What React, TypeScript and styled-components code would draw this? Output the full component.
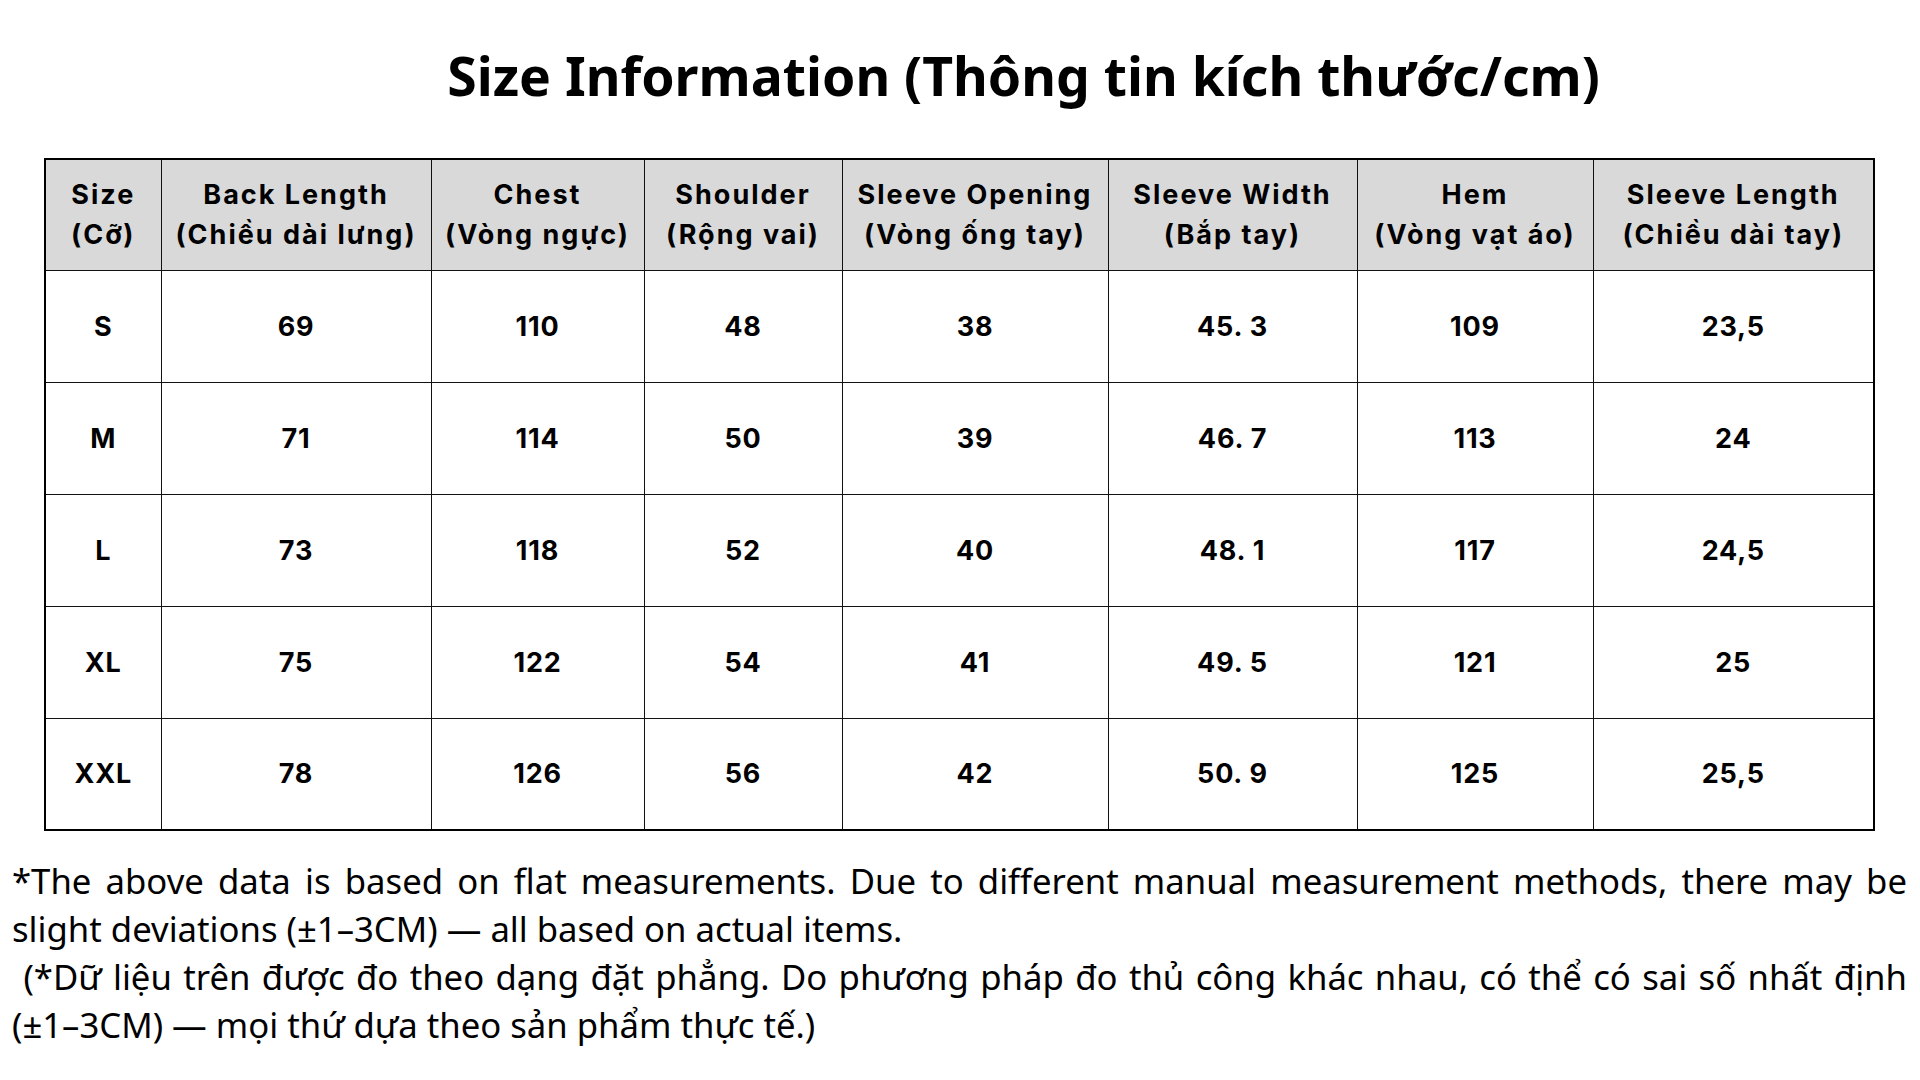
import styled, { createGlobalStyle } from "styled-components";

const GlobalStyle = createGlobalStyle`
    html, body {
        margin: 0;
        padding: 0;
        background: #ffffff;
        color: #000000;
    }
`;

const Page = styled.div`
    width: 1920px;
    height: 1080px;
    box-sizing: border-box;
    padding: 38px 13px 0 12px;
    display: flex;
    flex-direction: column;
`;

const Title = styled.h1`
    margin: 0;
    padding-left: 128px;
    text-align: center;
    font-family: "Noto Sans", "Open Sans", sans-serif;
    font-weight: 700;
    font-size: 53.5px;
    line-height: 76px;
    color: #000;
`;

const TableWrap = styled.div`
    margin-top: 44px;
    padding-left: 32px;
`;

const Table = styled.table`
    width: 1829px;
    border-collapse: collapse;
    border: 2px solid #000;
    table-layout: fixed;
    font-family: "Inter", "Noto Sans", sans-serif;
    font-weight: 700;
`;

const Col = styled.col<{ $w: number }>`
    width: ${(p) => p.$w}px;
`;

const HeadCell = styled.th`
    height: 111px;
    box-sizing: border-box;
    padding: 0;
    background: #d9d9d9;
    border: 1.5px solid #111;
    text-align: center;
    vertical-align: middle;
    font-size: 27px;
    line-height: 40px;
    letter-spacing: 2px;
    font-weight: 700;
    white-space: nowrap;
`;

const Cell = styled.td`
    height: 112px;
    box-sizing: border-box;
    padding: 0;
    border: 1.5px solid #111;
    text-align: center;
    vertical-align: middle;
    font-size: 27px;
    letter-spacing: 0.8px;
    font-weight: 700;
`;

const Notes = styled.div`
    margin-top: 26px;
    font-family: "Noto Sans", "Open Sans", sans-serif;
    font-size: 34.7px;
    line-height: 48px;
    color: #000;
`;

const Para = styled.p`
    margin: 0;
    text-align: justify;
`;

const columns = [
    { w: 116, en: "Size", vi: "(Cỡ)" },
    { w: 270, en: "Back Length", vi: "(Chiều dài lưng)" },
    { w: 213, en: "Chest", vi: "(Vòng ngực)" },
    { w: 198, en: "Shoulder", vi: "(Rộng vai)" },
    { w: 266, en: "Sleeve Opening", vi: "(Vòng ống tay)" },
    { w: 249, en: "Sleeve Width", vi: "(Bắp tay)" },
    { w: 236, en: "Hem", vi: "(Vòng vạt áo)" },
    { w: 281, en: "Sleeve Length", vi: "(Chiều dài tay)" },
];

const rows = [
    ["S", "69", "110", "48", "38", "45. 3", "109", "23,5"],
    ["M", "71", "114", "50", "39", "46. 7", "113", "24"],
    ["L", "73", "118", "52", "40", "48. 1", "117", "24,5"],
    ["XL", "75", "122", "54", "41", "49. 5", "121", "25"],
    ["XXL", "78", "126", "56", "42", "50. 9", "125", "25,5"],
];

export default function App() {
    return (
        <>
            <GlobalStyle />
            <Page>
                <Title>Size Information (Thông tin kích thước/cm)</Title>
                <TableWrap>
                    <Table>
                        <colgroup>
                            {columns.map((c) => (
                                <Col key={c.en} $w={c.w} />
                            ))}
                        </colgroup>
                        <thead>
                            <tr>
                                {columns.map((c) => (
                                    <HeadCell key={c.en}>
                                        {c.en}
                                        <br />
                                        {c.vi}
                                    </HeadCell>
                                ))}
                            </tr>
                        </thead>
                        <tbody>
                            {rows.map((r) => (
                                <tr key={r[0]}>
                                    {r.map((v, i) => (
                                        <Cell key={i}>{v}</Cell>
                                    ))}
                                </tr>
                            ))}
                        </tbody>
                    </Table>
                </TableWrap>
                <Notes>
                    <Para>
                        *The above data is based on flat measurements. Due to different manual measurement methods, there may be slight deviations (±1–3CM) — all based on actual items.
                    </Para>
                    <Para>
                        {"\u00a0"}(*Dữ liệu trên được đo theo dạng đặt phẳng. Do phương pháp đo thủ công khác nhau, có thể có sai số nhất định (±1–3CM) — mọi thứ dựa theo sản phẩm thực tế.)
                    </Para>
                </Notes>
            </Page>
        </>
    );
}
